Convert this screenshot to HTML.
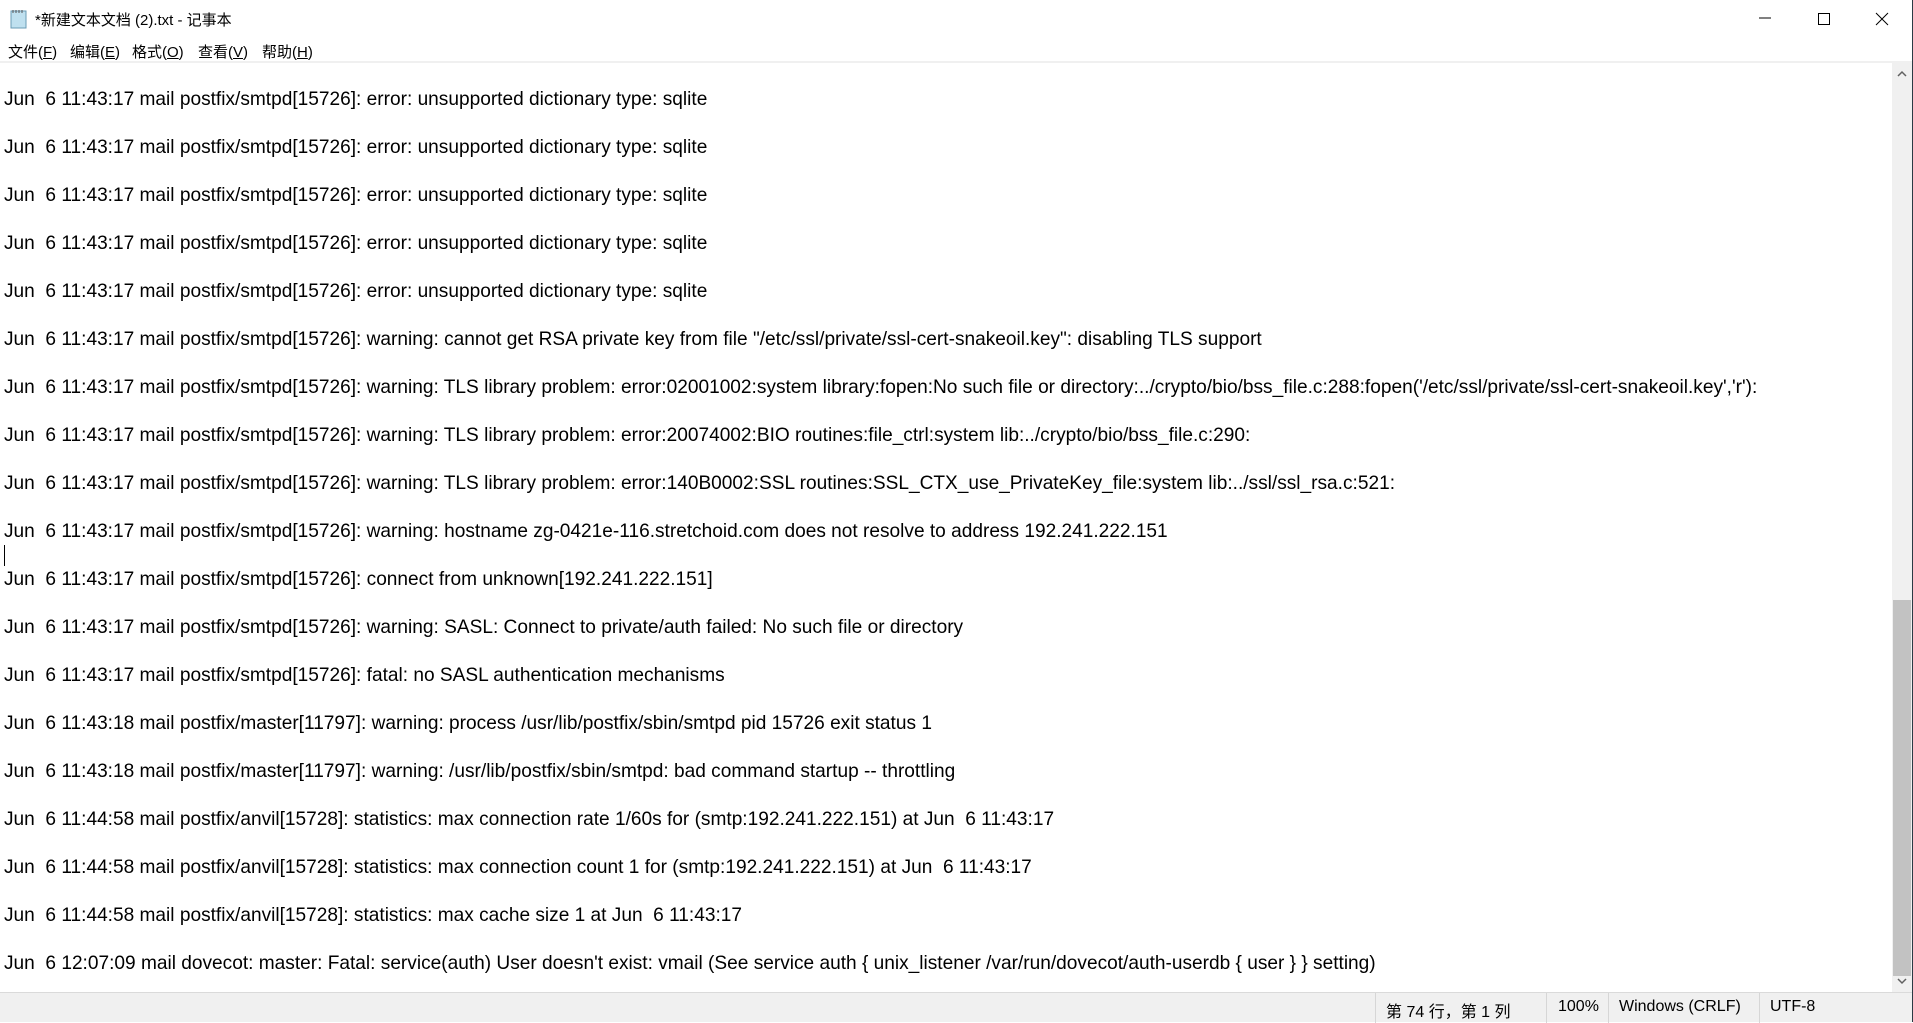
<!DOCTYPE html>
<html><head><meta charset="utf-8"><style>
*{margin:0;padding:0;box-sizing:border-box}
body{width:1913px;height:1022px;overflow:hidden;background:#fff;font-family:"Liberation Sans","Noto Sans CJK SC",sans-serif;position:relative}
.frame{position:absolute;right:0;top:0;width:1px;height:1022px;background:#2b3a44}
.title{position:absolute;left:35px;top:9px;font-size:15px;color:#000}
.menu{position:absolute;top:41px;font-size:15px;color:#000}
.sep{position:absolute;left:0;top:61px;width:1912px;height:2px;background:#f0f0f0}
.content{position:absolute;left:4px;top:76px;font-size:19.1px;line-height:48px;color:#000;white-space:pre}
.sb{position:absolute;left:1892px;top:63px;width:20px;height:929px;background:#f0f0f0}
.thumb{position:absolute;left:1893px;top:600px;width:18px;height:376px;background:#c2c2c2}
.status{position:absolute;left:0;top:992px;width:1912px;height:30px;background:#f0f0f0;border-top:1px solid #dadada;font-size:16px}
.status span{position:absolute;top:5px}
.dv{position:absolute;top:0;width:1px;height:30px;background:#d6d6d6}
.cursor{position:absolute;left:4px;top:545px;width:1px;height:21px;background:#000}
</style></head><body>
<div class="frame"></div>
<svg style="position:absolute;left:10px;top:9px" width="18" height="20" viewBox="0 0 18 20"><rect x="1" y="2" width="15" height="17" fill="#bfe0ef" stroke="#6a9bb5"/><path d="M3 1v3M6 1v3M9 1v3M12 1v3" stroke="#555"/></svg>
<div class="title">*新建文本文档 (2).txt - 记事本</div>
<svg style="position:absolute;left:1750px;top:8px" width="150" height="24"><path d="M9 10h12" stroke="#000"/><rect x="68.5" y="5.5" width="11" height="11" fill="none" stroke="#000"/><path d="M126 5l12 12M138 5l-12 12" stroke="#000"/></svg>
<div class="menu" style="left:8px">文件(<u>F</u>)</div>
<div class="menu" style="left:70px">编辑(<u>E</u>)</div>
<div class="menu" style="left:132px">格式(<u>O</u>)</div>
<div class="menu" style="left:198px">查看(<u>V</u>)</div>
<div class="menu" style="left:262px">帮助(<u>H</u>)</div>
<div class="sep"></div>
<div class="content">Jun  6 11:43:17 mail postfix/smtpd[15726]: error: unsupported dictionary type: sqlite
Jun  6 11:43:17 mail postfix/smtpd[15726]: error: unsupported dictionary type: sqlite
Jun  6 11:43:17 mail postfix/smtpd[15726]: error: unsupported dictionary type: sqlite
Jun  6 11:43:17 mail postfix/smtpd[15726]: error: unsupported dictionary type: sqlite
Jun  6 11:43:17 mail postfix/smtpd[15726]: error: unsupported dictionary type: sqlite
Jun  6 11:43:17 mail postfix/smtpd[15726]: warning: cannot get RSA private key from file "/etc/ssl/private/ssl-cert-snakeoil.key": disabling TLS support
Jun  6 11:43:17 mail postfix/smtpd[15726]: warning: TLS library problem: error:02001002:system library:fopen:No such file or directory:../crypto/bio/bss_file.c:288:fopen('/etc/ssl/private/ssl-cert-snakeoil.key','r'):
Jun  6 11:43:17 mail postfix/smtpd[15726]: warning: TLS library problem: error:20074002:BIO routines:file_ctrl:system lib:../crypto/bio/bss_file.c:290:
Jun  6 11:43:17 mail postfix/smtpd[15726]: warning: TLS library problem: error:140B0002:SSL routines:SSL_CTX_use_PrivateKey_file:system lib:../ssl/ssl_rsa.c:521:
Jun  6 11:43:17 mail postfix/smtpd[15726]: warning: hostname zg-0421e-116.stretchoid.com does not resolve to address 192.241.222.151
Jun  6 11:43:17 mail postfix/smtpd[15726]: connect from unknown[192.241.222.151]
Jun  6 11:43:17 mail postfix/smtpd[15726]: warning: SASL: Connect to private/auth failed: No such file or directory
Jun  6 11:43:17 mail postfix/smtpd[15726]: fatal: no SASL authentication mechanisms
Jun  6 11:43:18 mail postfix/master[11797]: warning: process /usr/lib/postfix/sbin/smtpd pid 15726 exit status 1
Jun  6 11:43:18 mail postfix/master[11797]: warning: /usr/lib/postfix/sbin/smtpd: bad command startup -- throttling
Jun  6 11:44:58 mail postfix/anvil[15728]: statistics: max connection rate 1/60s for (smtp:192.241.222.151) at Jun  6 11:43:17
Jun  6 11:44:58 mail postfix/anvil[15728]: statistics: max connection count 1 for (smtp:192.241.222.151) at Jun  6 11:43:17
Jun  6 11:44:58 mail postfix/anvil[15728]: statistics: max cache size 1 at Jun  6 11:43:17
Jun  6 12:07:09 mail dovecot: master: Fatal: service(auth) User doesn't exist: vmail (See service auth { unix_listener /var/run/dovecot/auth-userdb { user } } setting)</div>
<div class="cursor"></div>
<div class="sb"></div>
<div class="thumb"></div>
<svg style="position:absolute;left:1892px;top:63px" width="20" height="929"><path d="M6 13l4-4 4 4" stroke="#606060" stroke-width="1.5" fill="none"/><path d="M6 916l4 4 4-4" stroke="#606060" stroke-width="1.5" fill="none"/></svg>
<div class="status">
<div class="dv" style="left:1375px"></div><div class="dv" style="left:1546px"></div><div class="dv" style="left:1608px"></div><div class="dv" style="left:1759px"></div>
<span style="left:1386px">第 74 行，第 1 列</span>
<span style="left:1558px">100%</span>
<span style="left:1619px">Windows (CRLF)</span>
<span style="left:1770px">UTF-8</span>
</div>
</body></html>
